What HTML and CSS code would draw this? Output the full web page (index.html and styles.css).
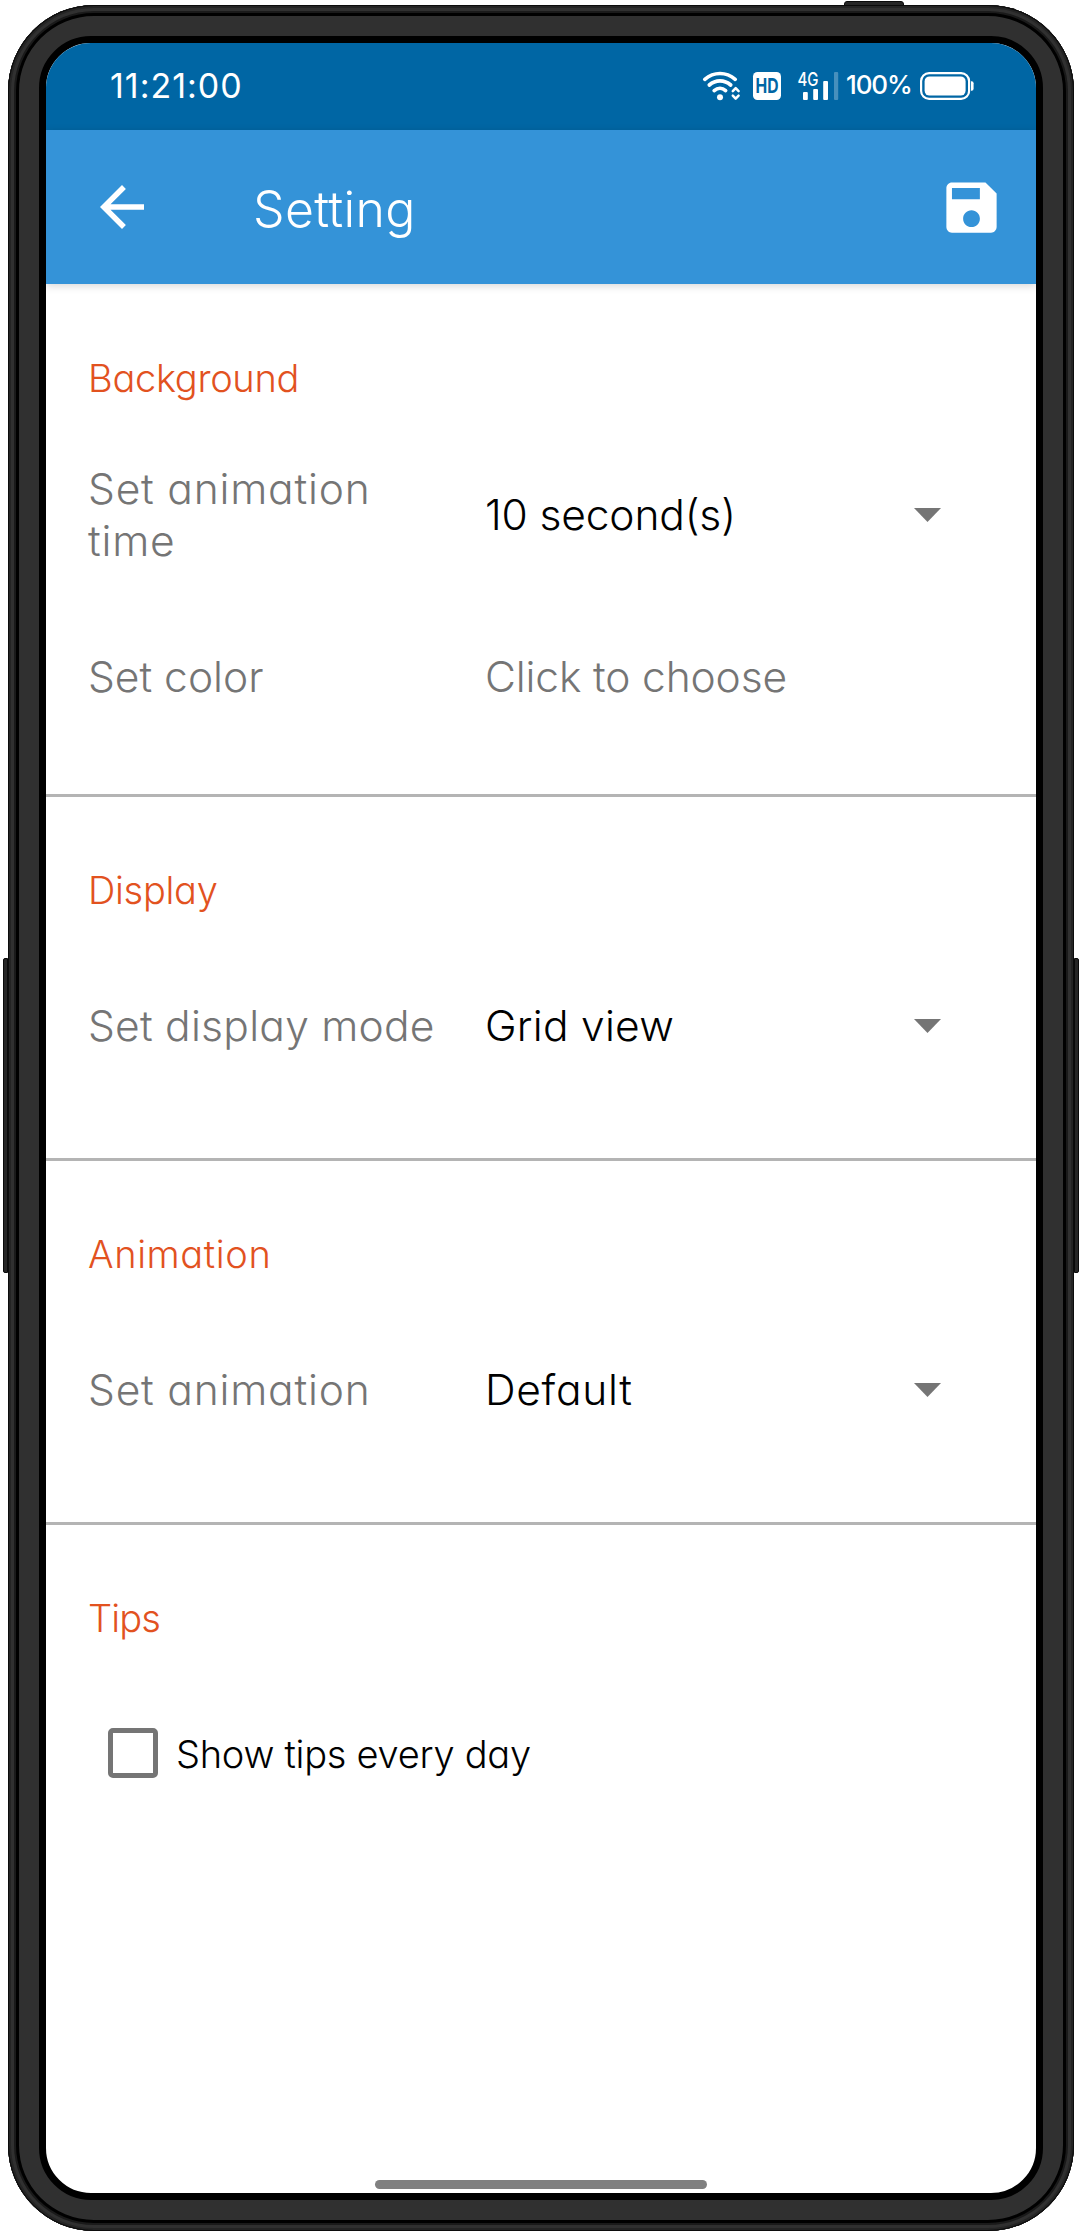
FILE: index.html
```
<!DOCTYPE html>
<html lang="en">
<head>
<meta charset="utf-8">
<title>Setting</title>
<link rel="stylesheet" href="styles.css">
</head>
<body>
<div class="phone">
  <span class="key key-top"></span>
  <span class="key key-left"></span>
  <span class="key key-right"></span>
  <div class="screen">
    <header class="status">
      <span class="clock">11:21:00</span>
      <div class="status-icons">
        <svg class="wifi" width="37" height="29" viewBox="0 0 37 29" fill="none" stroke="#fff" stroke-width="3.7" stroke-linecap="round">
          <path d="M1.8 7.4C11-.5 23-.5 32.2 7.4"/>
          <path d="M6.3 13C12.7 7.4 21.3 7.4 27.7 13"/>
          <path d="M11.2 18.6c3.6-3 8-3 11.4 0"/>
          <circle cx="17" cy="25.2" r="3" fill="#fff" stroke="none"/>
          <path d="M29.8 19.2l2.9-3 2.9 3M29.8 23.6l2.9 3 2.9-3" stroke-width="2.5" stroke-linejoin="round"/>
        </svg>
        <svg class="hd" width="28" height="28" viewBox="0 0 28 28">
          <rect width="28" height="28" rx="4.5" fill="#fff"/>
          <text x="2.6" y="21.2" font-size="20.5" font-weight="700" fill="#0066a4" textLength="23" lengthAdjust="spacingAndGlyphs">HD</text>
        </svg>
        <svg class="signal" width="42" height="28" viewBox="0 0 42 28" fill="#fff">
          <text x="-.5" y="14" font-size="18.5" font-weight="550" textLength="21" lengthAdjust="spacingAndGlyphs">4G</text>
          <rect x="5" y="20" width="4.8" height="8" rx="1"/>
          <rect x="15.2" y="17" width="4.8" height="11" rx="1"/>
          <rect x="25.2" y="9" width="4.8" height="19" rx="1"/>
          <rect x="36" y="0" width="4.2" height="28" rx="1" opacity=".28"/>
        </svg>
        <span class="percent">100%</span>
        <svg class="battery" width="54" height="28" viewBox="0 0 54 28">
          <rect x="1.1" y="1.1" width="48" height="25.8" rx="8" fill="none" stroke="#fff" stroke-width="2.2"/>
          <rect x="4.6" y="4.4" width="41" height="19.2" rx="5" fill="#fff"/>
          <path d="M51 9.2h.6a2 2 0 0 1 2 2v5.6a2 2 0 0 1-2 2H51z" fill="#fff"/>
        </svg>
      </div>
    </header>
    <nav class="appbar">
      <svg class="back" width="66" height="66" viewBox="0 0 24 24" fill="#fff"><path d="M20 11H7.83l5.59-5.59L12 4l-8 8 8 8 1.41-1.41L7.83 13H20v-2z"/></svg>
      <h1 class="title">Setting</h1>
      <svg class="save" width="67" height="67" viewBox="0 0 24 24" fill="#fff"><path d="M17 3H5c-1.11 0-2 .9-2 2v14c0 1.1.89 2 2 2h14c1.1 0 2-.9 2-2V7l-4-4zm-5 16c-1.66 0-3-1.34-3-3s1.34-3 3-3 3 1.34 3 3-1.34 3-3 3zm3-10H5V5h10v4z"/></svg>
    </nav>
    <main class="content">
      <section class="group group-first">
        <h2 class="heading">Background</h2>
        <div class="row">
          <span class="label wide">Set animation time</span>
          <span class="value">10 second(s)</span>
          <svg class="caret" width="27" height="14" viewBox="0 0 27 14"><path d="M0 0h27L13.5 14z" fill="#757575"/></svg>
        </div>
        <div class="row row-next">
          <span class="label short">Set color</span>
          <span class="value hint">Click to choose</span>
        </div>
      </section>
      <section class="group">
        <h2 class="heading">Display</h2>
        <div class="row">
          <span class="label">Set display mode</span>
          <span class="value medium">Grid view</span>
          <svg class="caret" width="27" height="14" viewBox="0 0 27 14"><path d="M0 0h27L13.5 14z" fill="#757575"/></svg>
        </div>
      </section>
      <section class="group">
        <h2 class="heading loose">Animation</h2>
        <div class="row">
          <span class="label wide">Set animation</span>
          <span class="value wide">Default</span>
          <svg class="caret" width="27" height="14" viewBox="0 0 27 14"><path d="M0 0h27L13.5 14z" fill="#757575"/></svg>
        </div>
      </section>
      <section class="group group-last">
        <h2 class="heading tight">Tips</h2>
        <div class="check-row">
          <span class="checkbox"></span>
          <span class="check-label">Show tips every day</span>
        </div>
      </section>
    </main>
    <div class="home-bar"></div>
  </div>
</div>
</body>
</html>
```
FILE: styles.css
```
* { box-sizing: border-box; }

body {
  margin: 0;
  background: #fff;
  font-family: Inter, "Liberation Sans", sans-serif;
  font-feature-settings: "cv11";
  font-weight: 350;
}

.phone {
  position: relative;
  width: 1066px;
  height: 2226px;
  margin: 5px 6px 0 8px;
  padding: 31px;
  border-radius: 86px;
  background: #303030;
  box-shadow:
    inset 0 0 0 1px #0c0c0c,
    inset 0 0 0 3px #242424,
    inset 0 0 0 6px #303030,
    inset 0 0 0 8px #1a1a1a,
    inset 0 0 0 11px #000;
}

/* hardware keys on the edges of the case */
.key { position: absolute; background: #262626; border: 1px solid #0a0a0a; }
.key-left, .key-right { top: 953px; width: 5px; height: 315px; }
.key-left { left: -5px; border-radius: 2px 0 0 2px; }
.key-right { right: -5px; border-radius: 0 2px 2px 0; }
.key-top { top: -4px; left: 836px; width: 60px; height: 5px; border-radius: 3px 3px 0 0; }

.screen {
  display: flex;
  flex-direction: column;
  height: 100%;
  border: 7px solid #000;
  border-radius: 52px;
  background: #fff;
  overflow: hidden;
}

.status {
  display: flex;
  align-items: flex-start;
  justify-content: space-between;
  height: 87px;
  padding: 22px 62px 0 64px;
  background: #0066a4;
  color: #fff;
}
.status svg { overflow: visible; }
.clock { font-size: 34px; line-height: 41px; font-weight: 400; letter-spacing: 1px; }
.status-icons { display: flex; align-items: center; padding-top: 6.5px; }
.hd { margin-left: 13px; }
.signal { margin-left: 17px; }
.percent {
  width: 72px;
  margin: -2px 0 0 6px;
  font-size: 26px;
  line-height: 28px;
  font-weight: 500;
  letter-spacing: -1.1px;
}
.battery { margin-left: 2px; }

.appbar {
  position: relative;
  display: flex;
  align-items: center;
  height: 154px;
  padding: 0 31px 0 43px;
  background: #3493d8;
  color: #fff;
  box-shadow: 0 2px 8px rgba(0, 0, 0, .16);
}
.title {
  margin: 4px 0 0 98px;
  font-size: 50px;
  line-height: 60px;
  font-weight: 350;
  letter-spacing: .3px;
}
.save { margin-left: auto; }

.content { flex: 1; }
.group { height: 364px; padding: 70.4px 95px 0 42px; border-bottom: 3px solid #b4b4b4; }
.group-first { height: 513px; padding-top: 70.5px; }
.group-last { border-bottom: 0; }
.heading {
  margin: 0 0 62px;
  color: #e2521f;
  font-size: 38px;
  line-height: 46px;
  font-weight: 350;
  letter-spacing: -.3px;
}
.heading.loose { letter-spacing: .6px; }
.heading.tight { letter-spacing: -.9px; }

.row {
  display: grid;
  grid-template-columns: 360px 1fr 27px;
  column-gap: 37px;
  align-items: center;
  min-height: 102px;
  font-size: 42.5px;
  line-height: 52.5px;
}
.group-first .row { line-height: 52px; }
.row-next { margin-top: 59px; }
.label { color: #757575; letter-spacing: .25px; }
.label.short { letter-spacing: 0; }
.value { color: #000; letter-spacing: -.15px; }
.value.hint { color: #757575; letter-spacing: -.15px; }
.value.medium { letter-spacing: .25px; }
.label.wide { letter-spacing: .8px; }
.value.wide { letter-spacing: .7px; }
.row .caret { margin-left: -37px; justify-self: end; }

.check-row { display: flex; align-items: center; height: 102px; margin-top: -1px; padding-left: 20px; }
.checkbox { width: 50px; height: 50px; border: 5.5px solid #757575; border-radius: 5px; }
.check-label { margin: 2px 0 0 18px; font-size: 38px; line-height: 46px; letter-spacing: -.27px; }

.home-bar { align-self: center; width: 332px; height: 9px; margin-bottom: 4px; border-radius: 5px; background: #808080; }
```
